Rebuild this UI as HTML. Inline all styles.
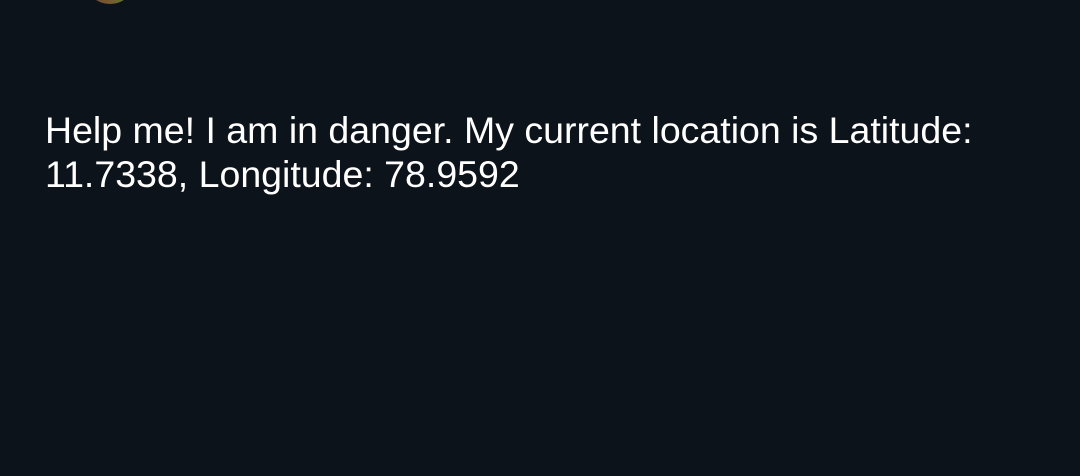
<!DOCTYPE html>
<html><head><meta charset="utf-8"><style>
html,body{margin:0;padding:0;width:1080px;height:476px;background:#0d131a;overflow:hidden}
.t{position:absolute;left:45px;font-family:"Liberation Sans",Arial,sans-serif;font-size:37.5px;color:#fff;white-space:nowrap;line-height:44px}
.dot{position:absolute;left:86px;top:-40px;width:48px;height:44px;border-radius:50%;background:linear-gradient(90deg,#6b4a2a 0%,#7a5a30 50%,#4c8a2c 100%)}
</style></head><body>
<div class="dot"></div>
<div class="t" style="top:108px">Help me! I am in danger. My current location is Latitude:</div>
<div class="t" style="top:152px">11.7338, Longitude: 78.9592</div>
</body></html>
